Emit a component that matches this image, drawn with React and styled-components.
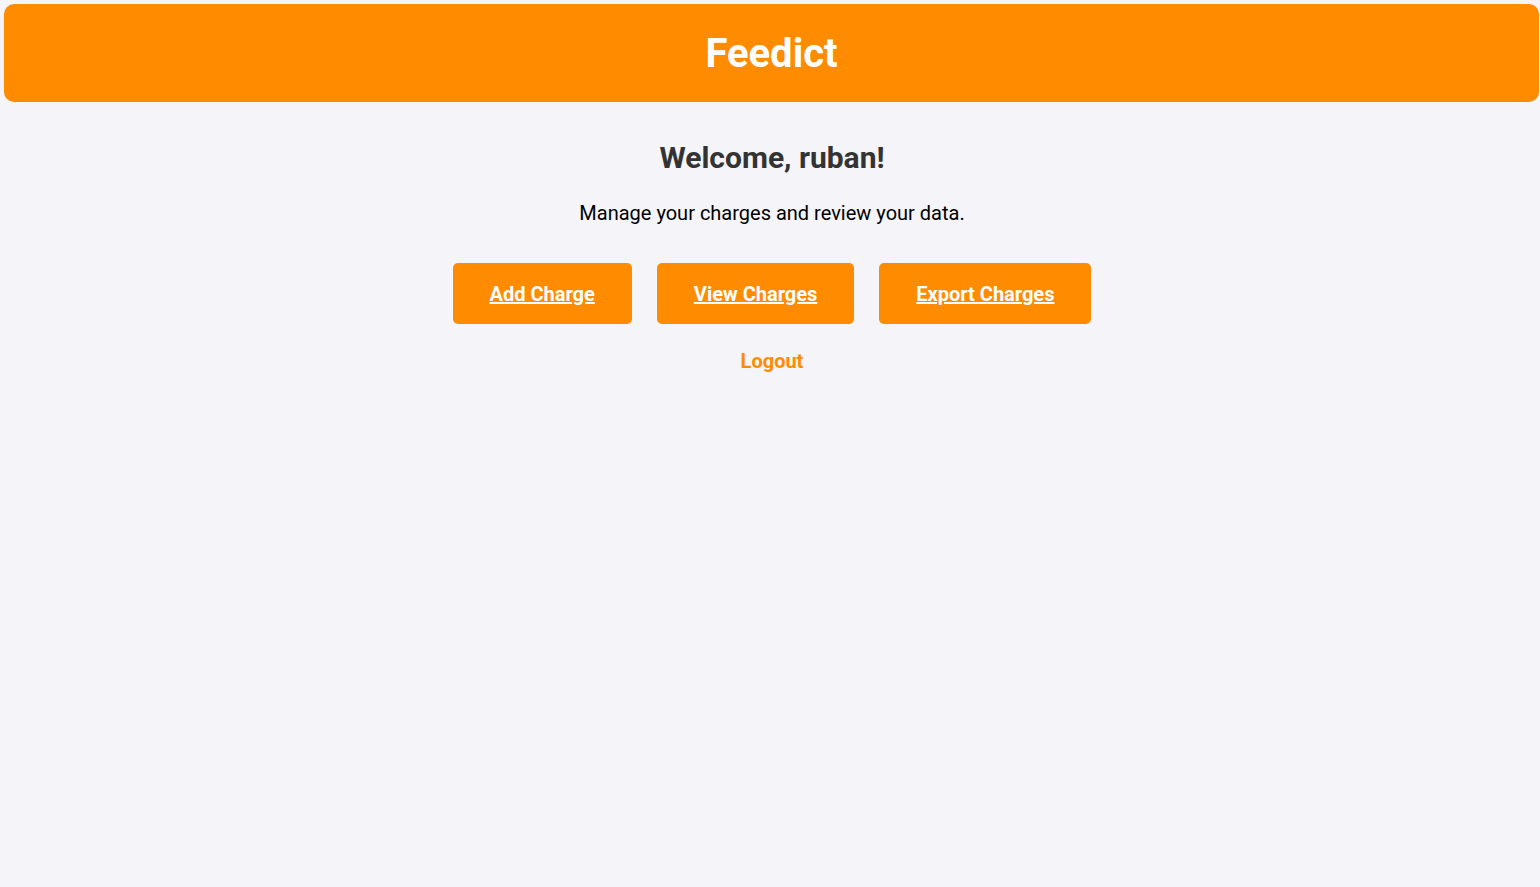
import React from "react";
import styled, { createGlobalStyle } from "styled-components";

const GlobalStyle = createGlobalStyle`
  html, body {
    margin: 0;
    padding: 0;
    background: #f4f4f9;
    font-family: Roboto, "Liberation Sans", Arial, sans-serif;
  }
`;

const Header = styled.header`
  background: #ff8c00;
  margin: 4px 1px 0 4px;
  border-radius: 10px;
  height: 98px;
  display: flex;
  align-items: center;
  justify-content: center;
`;

const Title = styled.h1`
  margin: 0;
  color: #ffffff;
  font-size: 40px;
  font-weight: 700;
`;

const Main = styled.main`
  display: flex;
  flex-direction: column;
  align-items: center;
  padding: 38px 0 0 4px;
`;

const Welcome = styled.h2`
  margin: 0;
  color: #333333;
  font-size: 30px;
  font-weight: 700;
`;

const Subtitle = styled.p`
  margin: 26px 0 0;
  color: #000000;
  font-size: 20px;
`;

const Actions = styled.div`
  display: flex;
  gap: 25px;
  margin-top: 38px;
`;

const ActionButton = styled.button`
  background: #ff8c00;
  border: none;
  border-radius: 5px;
  height: 61px;
  padding: 0 37px;
  cursor: pointer;
  font-family: inherit;
`;

const ActionLink = styled.a`
  color: #ffffff;
  font-size: 20px;
  font-weight: 700;
  text-decoration: underline;
`;

const Logout = styled.a`
  margin-top: 25px;
  color: #ff8c00;
  font-size: 20px;
  font-weight: 700;
  text-decoration: none;
  cursor: pointer;
`;

export default function App() {
  const actions = ["Add Charge", "View Charges", "Export Charges"];
  return (
    <>
      <GlobalStyle />
      <Header>
        <Title>Feedict</Title>
      </Header>
      <Main>
        <Welcome>Welcome, ruban!</Welcome>
        <Subtitle>Manage your charges and review your data.</Subtitle>
        <Actions>
          {actions.map((label) => (
            <ActionButton key={label}>
              <ActionLink href="#">{label}</ActionLink>
            </ActionButton>
          ))}
        </Actions>
        <Logout href="#">Logout</Logout>
      </Main>
    </>
  );
}
